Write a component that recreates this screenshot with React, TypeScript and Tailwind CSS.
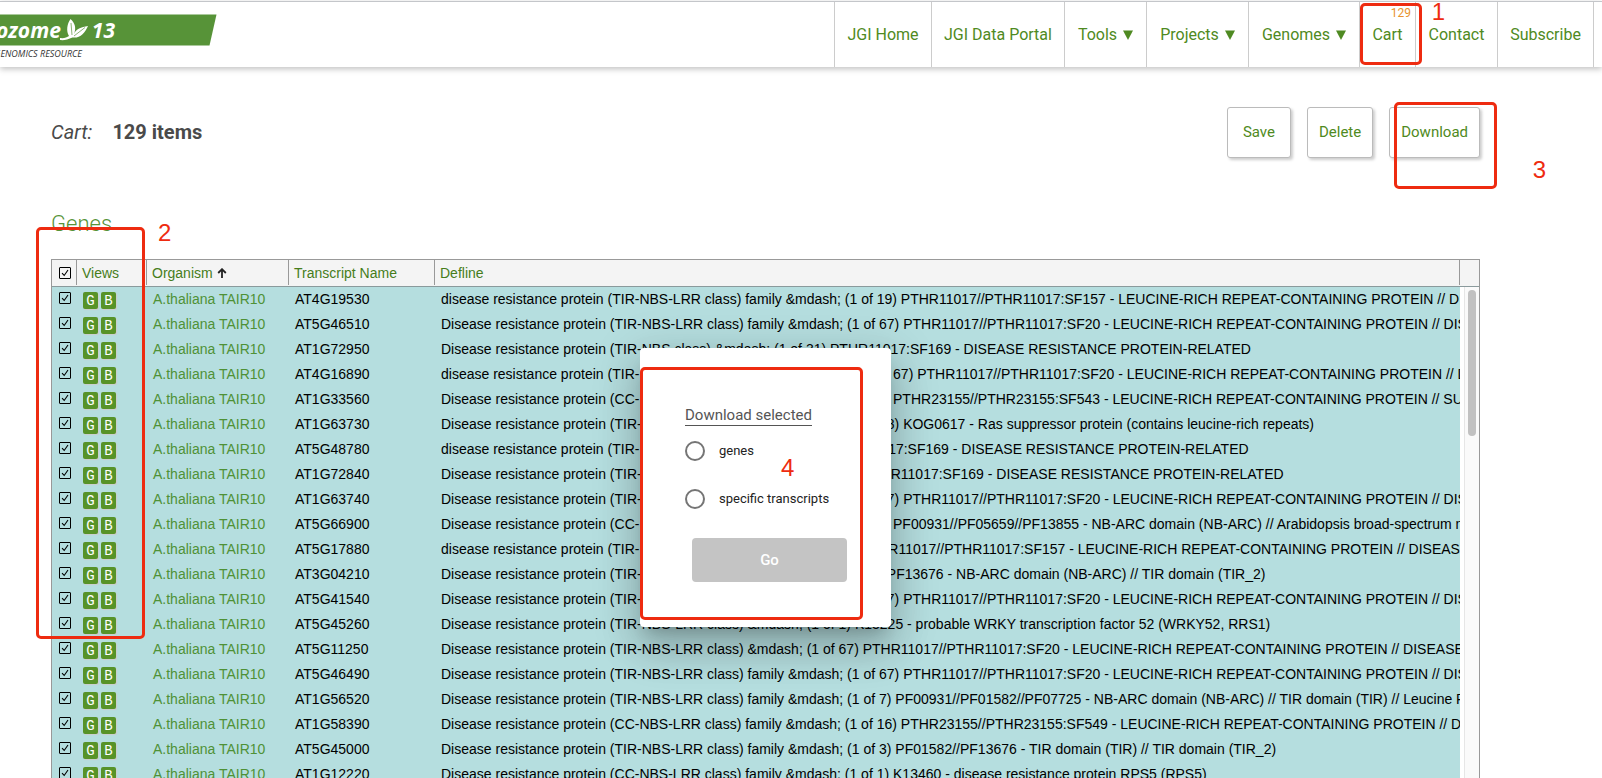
import React, { useState } from "react";

type Gene = { name: string; defline: string };

const genes: Gene[] = [
  { name: "AT4G19530", defline: "disease resistance protein (TIR-NBS-LRR class) family &mdash; (1 of 19) PTHR11017//PTHR11017:SF157 - LEUCINE-RICH REPEAT-CONTAINING PROTEIN // DISEASE RESISTANCE PROTEIN" },
  { name: "AT5G46510", defline: "Disease resistance protein (TIR-NBS-LRR class) family &mdash; (1 of 67) PTHR11017//PTHR11017:SF20 - LEUCINE-RICH REPEAT-CONTAINING PROTEIN // DISEASE RESISTANCE PROTEIN" },
  { name: "AT1G72950", defline: "Disease resistance protein (TIR-NBS class) &mdash; (1 of 31) PTHR11017:SF169 - DISEASE RESISTANCE PROTEIN-RELATED" },
  { name: "AT4G16890", defline: "disease resistance protein (TIR-NBS-LRR class), putative &mdash; (1 of 67) PTHR11017//PTHR11017:SF20 - LEUCINE-RICH REPEAT-CONTAINING PROTEIN // DISEASE RESISTANCE PROTEIN" },
  { name: "AT1G33560", defline: "Disease resistance protein (CC-NBS-LRR class) family &mdash; (1 of 3) PTHR23155//PTHR23155:SF543 - LEUCINE-RICH REPEAT-CONTAINING PROTEIN // SUBFAMILY NOT NAMED" },
  { name: "AT1G63730", defline: "Disease resistance protein (TIR-NBS-LRR class) family &mdash; (1 of 18) KOG0617 - Ras suppressor protein (contains leucine-rich repeats)" },
  { name: "AT5G48780", defline: "disease resistance protein (TIR-NBS class) &mdash; (1 of 31) PTHR11017:SF169 - DISEASE RESISTANCE PROTEIN-RELATED" },
  { name: "AT1G72840", defline: "Disease resistance protein (TIR-NBS-LRR class) &mdash; (1 of 31) PTHR11017:SF169 - DISEASE RESISTANCE PROTEIN-RELATED" },
  { name: "AT1G63740", defline: "Disease resistance protein (TIR-NBS-LRR class) family &mdash; (1 of 67) PTHR11017//PTHR11017:SF20 - LEUCINE-RICH REPEAT-CONTAINING PROTEIN // DISEASE RESISTANCE PROTEIN" },
  { name: "AT5G66900", defline: "Disease resistance protein (CC-NBS-LRR class) family &mdash; (1 of 2) PF00931//PF05659//PF13855 - NB-ARC domain (NB-ARC) // Arabidopsis broad-spectrum mildew resistance protein" },
  { name: "AT5G17880", defline: "disease resistance protein (TIR-NBS-LRR class) &mdash; (1 of 19) PTHR11017//PTHR11017:SF157 - LEUCINE-RICH REPEAT-CONTAINING PROTEIN // DISEASE RESISTANCE PROTEIN" },
  { name: "AT3G04210", defline: "Disease resistance protein (TIR-NBS class) &mdash; (1 of 8) PF00931//PF13676 - NB-ARC domain (NB-ARC) // TIR domain (TIR_2)" },
  { name: "AT5G41540", defline: "Disease resistance protein (TIR-NBS-LRR class) family &mdash; (1 of 67) PTHR11017//PTHR11017:SF20 - LEUCINE-RICH REPEAT-CONTAINING PROTEIN // DISEASE RESISTANCE PROTEIN" },
  { name: "AT5G45260", defline: "Disease resistance protein (TIR-NBS-LRR class) &mdash; (1 of 1) K13225 - probable WRKY transcription factor 52 (WRKY52, RRS1)" },
  { name: "AT5G11250", defline: "Disease resistance protein (TIR-NBS-LRR class) &mdash; (1 of 67) PTHR11017//PTHR11017:SF20 - LEUCINE-RICH REPEAT-CONTAINING PROTEIN // DISEASE RESISTANCE PROTEIN" },
  { name: "AT5G46490", defline: "Disease resistance protein (TIR-NBS-LRR class) family &mdash; (1 of 67) PTHR11017//PTHR11017:SF20 - LEUCINE-RICH REPEAT-CONTAINING PROTEIN // DISEASE RESISTANCE PROTEIN" },
  { name: "AT1G56520", defline: "Disease resistance protein (TIR-NBS-LRR class) family &mdash; (1 of 7) PF00931//PF01582//PF07725 - NB-ARC domain (NB-ARC) // TIR domain (TIR) // Leucine Rich Repeat (LRR_3)" },
  { name: "AT1G58390", defline: "Disease resistance protein (CC-NBS-LRR class) family &mdash; (1 of 16) PTHR23155//PTHR23155:SF549 - LEUCINE-RICH REPEAT-CONTAINING PROTEIN // DISEASE RESISTANCE PROTEIN" },
  { name: "AT5G45000", defline: "Disease resistance protein (TIR-NBS-LRR class) family &mdash; (1 of 3) PF01582//PF13676 - TIR domain (TIR) // TIR domain (TIR_2)" },
  { name: "AT1G12220", defline: "Disease resistance protein (CC-NBS-LRR class) family &mdash; (1 of 1) K13460 - disease resistance protein RPS5 (RPS5)" },
];

function Logo() {
  return (
    <a href="#home" aria-label="Phytozome 13" className="block w-[217px] shrink-0 pt-3">
      <span className="relative flex h-8 items-center overflow-hidden text-white">
        <svg className="absolute inset-0" width="217" height="32" viewBox="0 0 217 32" aria-hidden="true">
          <path d="M0 0.5H216.5L209.5 31.5H0Z" fill="#579338" />
        </svg>
        <span className="relative flex w-[115px] items-center justify-end font-['Open_Sans'] text-[21px] leading-8 font-bold italic">
          <span>ozome</span>
          <svg className="-ml-px shrink-0" width="28" height="22" viewBox="0 0 28 22" aria-hidden="true">
            <path d="M0 19C4 19.500 7 18.500 9 17C6 12 7 5 10.500 0C15 4 16.500 9 14 15C16 10 21 8 28 7C25 14 20 19.500 12.500 18.500C8 20.500 4 21.500 0 21Z" fill="#fff" />
            <path d="M11 4L12 16M25 8.500L14 17" stroke="#579338" strokeWidth="0.7" fill="none" />
          </svg>
          <span className="pl-1">13</span>
        </span>
      </span>
      <span className="flex w-[82px] justify-end font-['Open_Sans'] text-[9px] leading-4 whitespace-nowrap text-[#333] italic">
        GENOMICS RESOURCE
      </span>
    </a>
  );
}

const navItem =
  "relative flex items-center justify-center border-l border-[#ccc] text-[#4f8a22] text-[16px]";

function Triangle() {
  return (
    <svg width="10" height="10" viewBox="0 0 10 10" className="ml-[6px]" aria-hidden="true">
      <path d="M0 0.5H10L5 10Z" fill="#4f8a22" />
    </svg>
  );
}

function Header() {
  return (
    <header className="flex h-[66px] justify-between border-t border-[#c4c6ca] bg-white shadow-[0_2px_6px_rgba(0,0,0,0.25)]">
      <Logo />
      <nav className="mr-2 flex border-r border-[#ccc]">
        <a href="#jgi" className={`${navItem} w-[97px]`}>JGI Home</a>
        <a href="#portal" className={`${navItem} w-[133px]`}>JGI Data Portal</a>
        <a href="#tools" className={`${navItem} w-[82px]`}>Tools<Triangle /></a>
        <a href="#projects" className={`${navItem} w-[102px]`}>Projects<Triangle /></a>
        <a href="#genomes" className={`${navItem} w-[111px]`}>Genomes<Triangle /></a>
        <a href="#cart" className={`${navItem} w-[56px]`}>
          Cart
          <span className="absolute top-[3px] right-1 text-[12px] leading-4 text-[#e8932e]">129</span>
        </a>
        <a href="#contact" className={`${navItem} w-[82px]`}>Contact</a>
        <a href="#subscribe" className={`${navItem} w-[96px]`}>Subscribe</a>
      </nav>
    </header>
  );
}

function ActionButton({ children }: { children: React.ReactNode }) {
  return (
    <button className="h-[51px] min-w-16 rounded-[3px] border border-[#bbb] bg-white px-[11px] text-[15px] text-[#4f8a22] shadow-[2px_2px_3px_rgba(0,0,0,0.2)]">
      {children}
    </button>
  );
}

function Check({ label }: { label: string }) {
  return (
    <span className="relative block size-3">
      <input
        type="checkbox"
        defaultChecked
        aria-label={label}
        className="peer block size-3 appearance-none rounded-[1px] border border-black"
      />
      <svg
        className="pointer-events-none absolute inset-0 hidden peer-checked:block"
        width="12"
        height="12"
        viewBox="0 0 12 12"
        aria-hidden="true"
      >
        <path d="M3 6.200L5.200 8.500L9 3" stroke="#000" strokeWidth="1.100" fill="none" />
      </svg>
    </span>
  );
}

function ViewButton({ letter, label }: { letter: string; label: string }) {
  return (
    <button
      aria-label={label}
      className="flex h-[17px] w-[15px] items-center justify-center rounded-[2px] bg-[#579328] font-['Liberation_Mono',monospace] text-[14px] leading-4 text-white shadow-[1px_1px_1px_#ccc]"
    >
      {letter}
    </button>
  );
}

const th = "h-[27px] border-b border-[#8a9a9c] p-0 text-left align-top font-normal";
const thInner = "flex h-[25px] items-center border-r border-[#999] pl-[5px] whitespace-nowrap";
const td = "p-0 pb-[2px] pl-[6px]";

function GeneTable() {
  return (
    <div className="h-[519px] overflow-hidden border border-b-0 border-[#999]">
      <table className="w-full table-fixed border-separate border-spacing-0 text-[14px] leading-5">
        <colgroup>
          <col className="w-[25px]" />
          <col className="w-[70px]" />
          <col className="w-[142px]" />
          <col className="w-[146px]" />
          <col />
          <col className="w-[19px]" />
        </colgroup>
        <thead className="bg-[#f4f4f4] text-[#467d1b]">
          <tr>
            <th className={th}>
              <div className="flex h-[25px] items-center border-r border-[#999] pl-[7px]">
                <Check label="Select all" />
              </div>
            </th>
            <th className={th}><div className={thInner}>Views</div></th>
            <th className={th}>
              <div className={thInner}>
                Organism
                <svg width="10" height="10" viewBox="0 0 10 10" className="ml-1" aria-hidden="true">
                  <path d="M5 10V1.500M1.200 5L5 1.200L8.800 5" stroke="#222" strokeWidth="1.800" fill="none" />
                </svg>
              </div>
            </th>
            <th className={th}><div className={thInner}>Transcript Name</div></th>
            <th className={th}><div className={thInner}>Defline</div></th>
            <th className={th} aria-hidden="true" />
          </tr>
        </thead>
        <tbody>
          {genes.map((g, i) => (
            <tr key={g.name} className="h-[25px] bg-[#b5dedf] text-black">
              <td className="p-0 pb-1 pl-[7px]"><Check label={`Select ${g.name}`} /></td>
              <td className="p-0 pt-[2px] pl-[6px]">
                <div className="flex gap-[3px]">
                  <ViewButton letter="G" label={`Gene page of ${g.name}`} />
                  <ViewButton letter="B" label={`Browse ${g.name}`} />
                </div>
              </td>
              <td className={td}><a href="#organism" className="text-[#4f9136]">A.thaliana TAIR10</a></td>
              <td className={td}>{g.name}</td>
              <td className={`${td} overflow-hidden whitespace-nowrap`}>{g.defline}</td>
              {i === 0 && (
                <td rowSpan={genes.length} className="bg-white p-0 align-top">
                  <div className="ml-1 h-[500px] border-l border-[#e6e6e6] bg-[#fafafa] pt-[3px] pl-[3px]">
                    <div className="h-[146px] w-2 rounded-full bg-[#c1c1c1]" />
                  </div>
                </td>
              )}
            </tr>
          ))}
        </tbody>
      </table>
    </div>
  );
}

function DownloadDialog() {
  const [choice, setChoice] = useState("");
  const options = ["genes", "specific transcripts"];
  return (
    <div
      role="dialog"
      aria-labelledby="download-title"
      className="h-[279px] w-[251px] rounded-[4px] bg-white pt-[57px] pr-11 pl-[45px] shadow-[0_11px_15px_-7px_rgba(0,0,0,0.2),0_24px_38px_3px_rgba(0,0,0,0.14),0_9px_46px_8px_rgba(0,0,0,0.12)]"
    >
      <h2 id="download-title" className="w-fit border-b border-[#555] text-[15px] leading-5 text-[#555]">
        Download selected
      </h2>
      <div className="mt-[15px] flex flex-col gap-7 text-[13px] leading-5 text-[#222]">
        {options.map((o) => (
          <label key={o} className="flex items-center gap-[14px] whitespace-nowrap">
            <input
              type="radio"
              name="download"
              checked={choice === o}
              onChange={() => setChoice(o)}
              className="size-5 appearance-none rounded-full border-2 border-[#757575] checked:border-[6px]"
            />
            {o}
          </label>
        ))}
      </div>
      <button disabled={!choice} className="mt-[29px] ml-[7px] h-11 w-[155px] rounded-[4px] bg-[#c4c4c4] text-[15px] font-medium text-white">
        Go
      </button>
    </div>
  );
}

const mark = "pointer-events-none absolute rounded-[5px] border-[3px] border-[#ee2b10]";
const markNumber =
  "pointer-events-none absolute font-['Liberation_Sans'] text-[24px] leading-6 text-[#ee2b10]";

export default function App() {
  return (
    <div className="relative h-screen overflow-hidden bg-white font-['Roboto',sans-serif]">
      <div className="h-px" />
      <Header />
      <main className="pr-[122px] pl-[51px]">
        <div className="flex items-start justify-between pt-10">
          <h1 className="flex gap-5 pt-[11px] text-[20px] leading-7 text-[#4a4a4a]">
            <span className="italic">Cart:</span>
            <span className="font-bold">129 items</span>
          </h1>
          <div className="flex gap-4">
            <ActionButton>Save</ActionButton>
            <ActionButton>Delete</ActionButton>
            <ActionButton>Download</ActionButton>
          </div>
        </div>
        <h2 className="mt-[50px] mb-[19px] text-[22px] leading-8 font-light text-[#579338]">Genes</h2>
        <div className="font-['Liberation_Sans',Arial,sans-serif]">
          <GeneTable />
        </div>
      </main>
      <div className="absolute inset-x-0 top-[348px] flex justify-center pr-[71px]">
        <DownloadDialog />
      </div>
      <div className={`${mark} top-[3px] right-[180px] h-[62px] w-[62px]`} />
      <span className={`${markNumber} top-0 right-[157px]`}>1</span>
      <div className={`${mark} top-[227px] left-[36px] h-[412px] w-[109px]`} />
      <span className={`${markNumber} top-[221px] left-[158px]`}>2</span>
      <div className={`${mark} top-[102px] right-[105px] h-[87px] w-[103px]`} />
      <span className={`${markNumber} top-[158px] right-[56px]`}>3</span>
      <div className={`${mark} top-[367px] left-1/2 -ml-[161px] h-[253px] w-[223px]`} />
      <span className={`${markNumber} top-[456px] left-1/2 -ml-[20px]`}>4</span>
    </div>
  );
}
